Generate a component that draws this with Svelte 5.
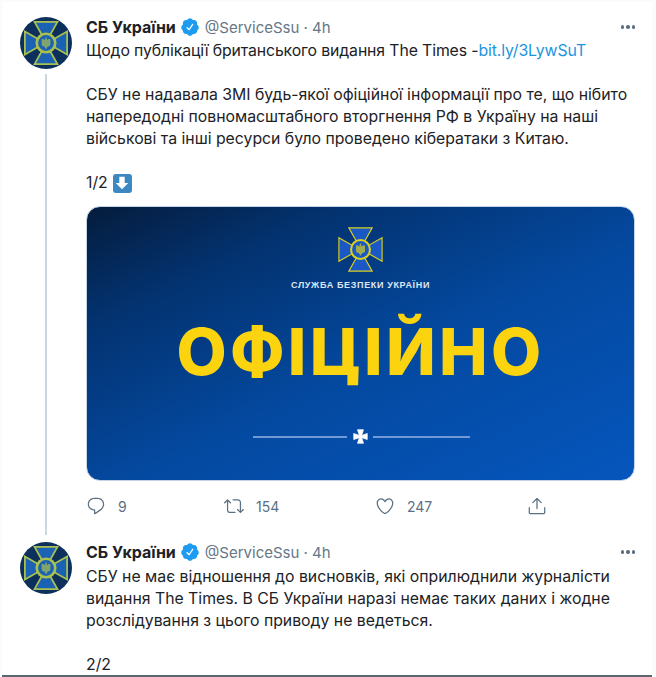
<script>
  const icons = {
    reply: 'M14.046 2.242l-4.148-.01h-.002c-4.374 0-7.8 3.427-7.8 7.802 0 4.098 3.186 7.206 7.465 7.37v3.828c0 .108.044.286.12.403.142.225.384.347.632.347.138 0 .277-.038.402-.118.264-.168 6.473-4.14 8.088-5.506 1.902-1.61 3.04-3.97 3.043-6.312v-.017c-.006-4.367-3.43-7.787-7.8-7.788zm3.787 12.972c-1.134.96-4.862 3.405-6.772 4.643V16.67c0-.414-.335-.75-.75-.75h-.396c-3.66 0-6.318-2.476-6.318-5.886 0-3.534 2.768-6.302 6.3-6.302l4.147.01h.002c3.532 0 6.3 2.766 6.302 6.296-.003 1.91-.942 3.844-2.514 5.176z',
    retweet: 'M23.77 15.67c-.292-.293-.767-.293-1.06 0l-2.22 2.22V7.65c0-2.068-1.683-3.75-3.75-3.75h-5.85c-.414 0-.75.336-.75.75s.336.75.75.75h5.85c1.24 0 2.25 1.01 2.25 2.25v10.24l-2.22-2.22c-.293-.293-.768-.293-1.06 0s-.294.768 0 1.06l3.5 3.5c.145.147.337.22.53.22s.383-.072.53-.22l3.5-3.5c.294-.292.294-.767 0-1.06zm-10.66 3.28H7.26c-1.24 0-2.25-1.01-2.25-2.25V6.46l2.22 2.22c.148.147.34.22.532.22s.384-.073.53-.22c.293-.293.293-.768 0-1.06l-3.5-3.5c-.293-.294-.768-.294-1.06 0l-3.5 3.5c-.294.292-.294.767 0 1.06s.767.293 1.06 0l2.22-2.22V16.7c0 2.068 1.683 3.75 3.75 3.75h5.85c.414 0 .75-.336.75-.75s-.337-.75-.75-.75z',
    like: 'M12 21.638h-.014C9.403 21.59 1.95 14.856 1.95 8.478c0-3.064 2.525-5.754 5.403-5.754 2.29 0 3.83 1.58 4.646 2.73.814-1.148 2.354-2.73 4.645-2.73 2.88 0 5.404 2.69 5.404 5.755 0 6.376-7.454 13.11-10.037 13.157H12zM7.354 4.225c-2.08 0-3.903 1.988-3.903 4.255 0 5.74 7.034 11.596 8.55 11.658 1.518-.062 8.55-5.917 8.55-11.658 0-2.267-1.823-4.255-3.903-4.255-2.528 0-3.94 2.936-3.952 2.965-.23.562-1.156.562-1.387 0-.014-.03-1.425-2.965-3.954-2.965z',
    share: 'M17.53 7.47l-5-5c-.293-.293-.768-.293-1.06 0l-5 5c-.294.293-.294.768 0 1.06s.767.294 1.06 0l3.72-3.72V15c0 .414.336.75.75.75s.75-.336.75-.75V4.81l3.72 3.72c.146.147.338.22.53.22s.384-.072.53-.22c.293-.293.293-.767 0-1.06zM19.708 21.944H4.292C3.028 21.944 2 20.916 2 19.652V14c0-.414.336-.75.75-.75s.75.336.75.75v5.652c0 .437.355.792.792.792h15.416c.437 0 .792-.355.792-.792V14c0-.414.336-.75.75-.75s.75.336.75.75v5.652c0 1.264-1.028 2.292-2.292 2.292z'
  };
  const badge = 'M22.5 12.5c0-1.58-.875-2.95-2.148-3.6.154-.435.238-.905.238-1.4 0-2.21-1.71-3.998-3.818-3.998-.47 0-.92.084-1.336.25C14.818 2.415 13.51 1.5 12 1.5s-2.816.917-3.437 2.25c-.415-.165-.866-.25-1.336-.25-2.11 0-3.818 1.79-3.818 4 0 .494.083.964.237 1.4-1.272.65-2.147 2.018-2.147 3.6 0 1.495.782 2.798 1.942 3.486-.02.17-.032.34-.032.514 0 2.21 1.708 4 3.818 4 .47 0 .92-.086 1.335-.25.62 1.334 1.926 2.25 3.437 2.25 1.512 0 2.818-.916 3.437-2.25.415.163.865.248 1.336.248 2.11 0 3.818-1.79 3.818-4 0-.174-.012-.344-.033-.513 1.158-.687 1.943-1.99 1.943-3.484zm-6.616-3.334l-4.334 6.5c-.145.217-.382.334-.625.334-.143 0-.288-.04-.416-.126l-.115-.094-2.415-2.415c-.293-.293-.293-.768 0-1.06s.768-.294 1.06 0l1.77 1.767 3.825-5.74c.23-.345.696-.436 1.04-.207.346.23.44.696.21 1.04z';
  const cross = 'M24 2H76L58 34Q66 37 66 42L98 24V76L66 58Q63 66 58 66L76 98H24L42 66Q34 63 34 58L2 76V24L34 42Q37 34 42 34Z';
  const malta = 'M6 1H14L11.5 8.5L19 6V14L11.5 11.5L14 19H6L8.5 11.5L1 14V6L8.5 8.5Z';
</script>

{#snippet emblem(size, line, fill, weight)}
  <svg class="emblem" width={size} height={size} viewBox="0 0 100 100" aria-hidden="true">
    <path d={cross} fill={fill} stroke={line} stroke-width={weight} />
    <circle cx="50" cy="50" r="21" fill={fill} stroke={line} stroke-width={weight + 2} />
    <path d="M50 35l3 9 2-3h5v12q0 5-6 5l-4 6-4-6q-6 0-6-5V41h5l2 3z" fill={line} opacity=".7" />
  </svg>
{/snippet}

{#snippet header()}
  <div class="header">
    <span class="name">СБ України</span>
    <svg class="badge" viewBox="0 0 24 24" aria-hidden="true"><path d={badge} /></svg>
    <span class="meta">@ServiceSsu · 4h</span>
    <span class="more"><i></i><i></i><i></i></span>
  </div>
{/snippet}

<main class="card">
  <article class="tweet first">
    <div class="rail">
      <div class="avatar">{@render emblem(44, '#a9c04f', '#1c62b4', 4)}</div>
      <div class="thread"></div>
    </div>
    <div class="body">
      {@render header()}
      <p class="lead">Щодо публікації британського видання The Times -<a href="#top">bit.ly/3LywSuT</a></p>
      <p>СБУ не надавала ЗМІ будь-якої офіційної інформації про те, що нібито<br />напередодні повномасштабного вторгнення РФ в Україну на наші<br />військові та інші ресурси було проведено кібератаки з Китаю.</p>
      <p class="count">1/2 <span class="arrow"><svg viewBox="0 0 20 20" width="18" height="18" aria-hidden="true"><path d="M7 3h6v7h4l-7 7-7-7h4z" fill="#fff" /></svg></span></p>

      <div class="banner">
        {@render emblem(45, '#dccf1e', '#1a58c6', 2.5)}
        <div class="service">СЛУЖБА БЕЗПЕКИ УКРАЇНИ</div>
        <div class="official">ОФІЦІЙНО</div>
        <div class="divider">
          <span></span>
          <svg viewBox="0 0 20 20" width="15" height="15" aria-hidden="true"><path d={malta} fill="#fff" stroke="#fff" stroke-width="1" stroke-linejoin="round" /></svg>
          <span class="long"></span>
        </div>
      </div>

      <div class="actions">
        <div class="action reply"><svg viewBox="0 0 24 24"><path d={icons.reply} /></svg><span>9</span></div>
        <div class="action retweet"><svg viewBox="0 0 24 24"><path d={icons.retweet} /></svg><span>154</span></div>
        <div class="action like"><svg viewBox="0 0 24 24"><path d={icons.like} /></svg><span>247</span></div>
        <div class="action"><svg viewBox="0 0 24 24"><path d={icons.share} /></svg></div>
      </div>
    </div>
  </article>

  <article class="tweet second">
    <div class="rail">
      <div class="avatar">{@render emblem(44, '#a9c04f', '#1c62b4', 4)}</div>
    </div>
    <div class="body">
      {@render header()}
      <p>СБУ не має відношення до висновків, які оприлюднили журналісти<br />видання The Times. В СБ України наразі немає таких даних і жодне<br />розслідування з цього приводу не ведеться.</p>
      <p class="last">2/2</p>
    </div>
  </article>
</main>

<style>
  :global(body) {
    margin: 0;
    background: #fff;
  }

  .card {
    box-sizing: border-box;
    width: 656px;
    height: 677px;
    padding: 15px 0 0 18px;
    overflow: hidden;
    border: solid #fbfbfb;
    border-width: 2px 4px 0 2px;
    box-shadow: inset 0 -2px 0 #5b6670;
    font-family: Inter, "Liberation Sans", sans-serif;
    color: #1c2226;
  }

  .tweet {
    display: flex;
    gap: 14px;
  }

  .first {
    padding-bottom: 19px;
  }

  .second {
    margin-top: 7px;
  }

  .rail {
    width: 52px;
    flex: none;
    display: flex;
    flex-direction: column;
    align-items: center;
  }

  .avatar {
    width: 52px;
    height: 52px;
    flex: none;
    border-radius: 50%;
    background: #0c2f5c;
    display: flex;
    align-items: center;
    justify-content: center;
  }

  .thread {
    width: 2.5px;
    flex: 1;
    margin: 5px 0 -19px;
    background: #ccd6dd;
  }

  .body {
    width: 549px;
  }

  .header {
    display: flex;
    align-items: center;
    height: 20px;
    font-size: 15px;
  }

  .name {
    font-size: 16px;
    font-weight: 700;
  }

  .badge {
    width: 20px;
    height: 20px;
    margin: 0 5px 0 4px;
    fill: #1d9bf0;
  }

  .meta {
    color: #657786;
  }

  .more {
    margin-left: auto;
    display: flex;
    gap: 2px;
  }

  .more i {
    width: 3.5px;
    height: 3.5px;
    border-radius: 50%;
    background: #5b7083;
  }

  p {
    margin: 0 0 22px;
    font-size: 15.8px;
    line-height: 22px;
    white-space: nowrap;
  }

  .header + p {
    margin-top: 3px;
  }

  .second .header + p {
    margin-top: 4px;
  }

  .lead {
    letter-spacing: -0.11px;
  }

  a {
    color: #1b95e0;
    text-decoration: none;
  }

  .count {
    display: flex;
    align-items: center;
    gap: 5px;
    margin-bottom: 12px;
  }

  .arrow {
    width: 19px;
    height: 19px;
    border-radius: 3px;
    background: #3b88c3;
    display: flex;
    align-items: center;
    justify-content: center;
  }

  .banner {
    box-sizing: border-box;
    height: 275px;
    padding-top: 20px;
    border-radius: 14px;
    border: 1px solid #c4d3e6;
    background: linear-gradient(155deg, #051c3c 0%, #03326f 22%, #0449a0 55%, #0556bd 100%);
    display: flex;
    flex-direction: column;
    align-items: center;
  }

  .service {
    margin-top: 7px;
    font-family: "Liberation Sans", sans-serif;
    font-size: 9px;
    font-weight: 700;
    letter-spacing: 0.65px;
    line-height: 12px;
    color: #dce6f4;
  }

  .official {
    margin-top: 23px;
    font-size: 65px;
    font-weight: 800;
    letter-spacing: 3.3px;
    line-height: 76px;
    color: #fbd30f;
  }

  .divider {
    margin-top: 39px;
    display: flex;
    align-items: center;
    gap: 5px;
    margin-left: 2px;
  }

  .divider span {
    width: 94px;
    height: 2px;
    background: #6f9ad6;
  }

  .divider span:first-child {
    margin-right: 1px;
  }

  .divider .long {
    width: 97px;
  }

  .actions {
    display: flex;
    align-items: center;
    height: 20px;
    margin-top: 15px;
  }

  .action {
    display: flex;
    align-items: center;
    gap: 12px;
    color: #5b7083;
    font-size: 14px;
  }

  .action svg {
    width: 20px;
    height: 20px;
    fill: #5b7083;
  }

  .reply {
    width: 138px;
  }

  .retweet {
    width: 151px;
  }

  .like {
    width: 152px;
  }
</style>
